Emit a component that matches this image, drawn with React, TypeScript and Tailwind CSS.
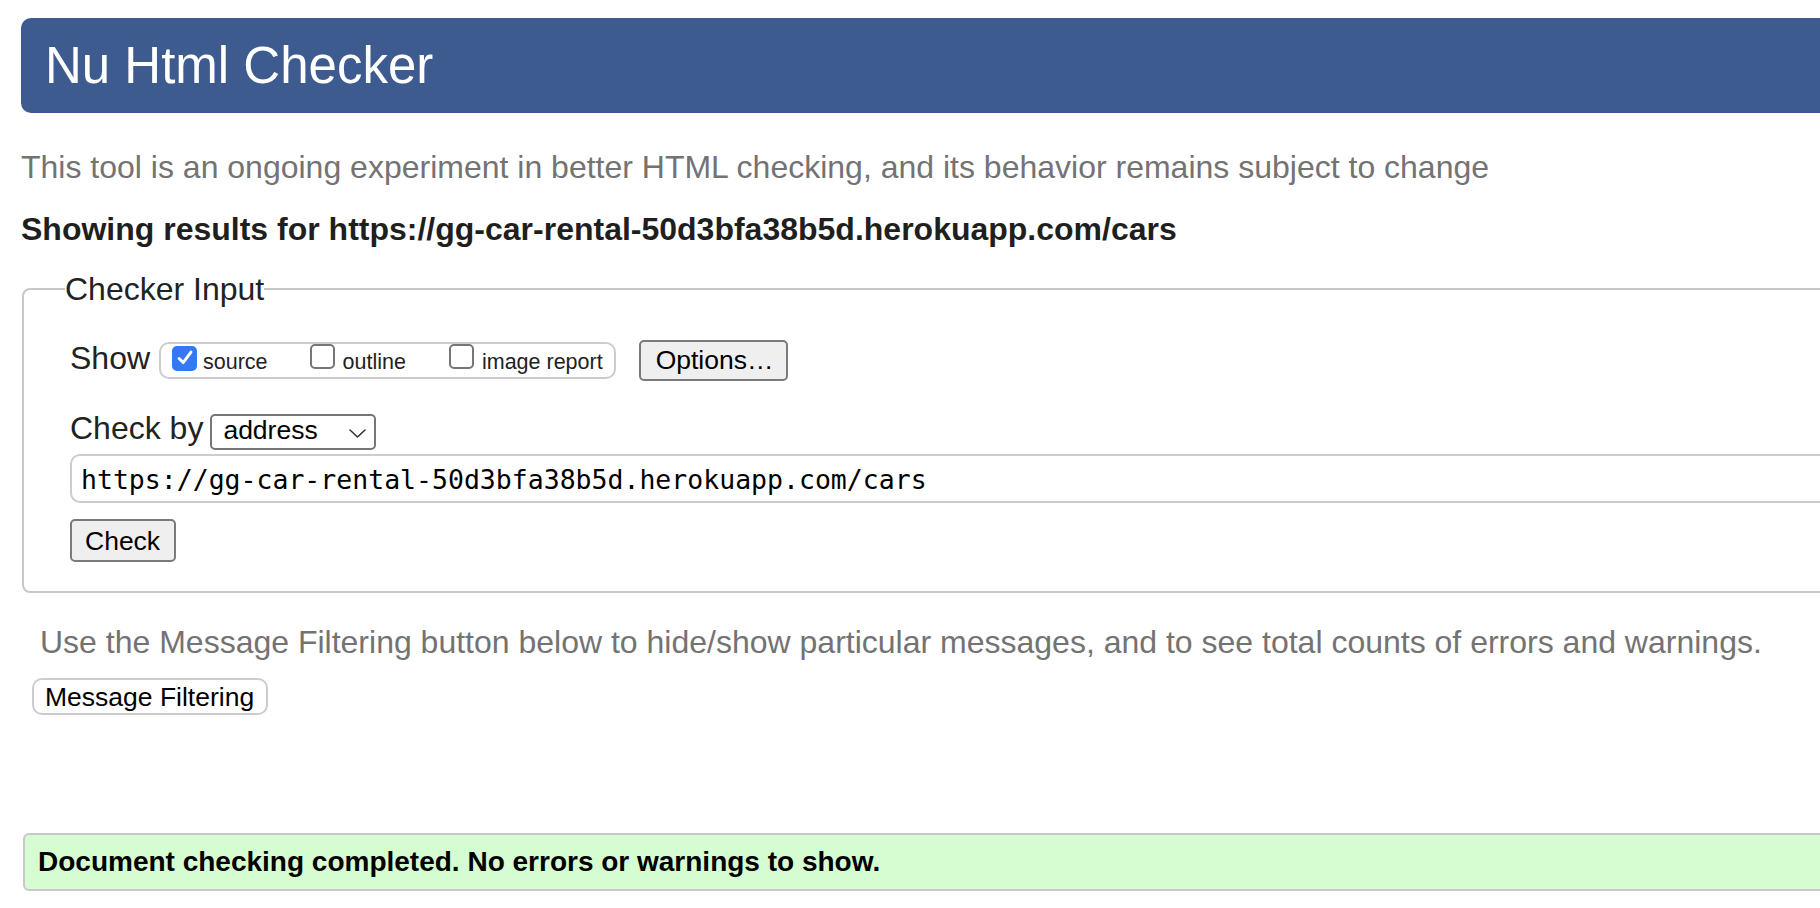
import React from 'react';

const Checkbox = ({ checked }: { checked?: boolean }) =>
  checked ? (
    <span className="flex h-[25px] w-[25px] shrink-0 items-center justify-center rounded-[5px] bg-[#3478f6]">
      <svg viewBox="0 0 24 24" className="h-[22px] w-[22px]" fill="none" stroke="white" strokeWidth="3.2" strokeLinecap="round" strokeLinejoin="round">
        <path d="M5.5 12.5 L10 17 L18.5 5.5" />
      </svg>
    </span>
  ) : (
    <span className="block h-[25px] w-[25px] shrink-0 rounded-[5px] border-2 border-[#767676] bg-white" />
  );

const App = () => {
  return (
    <div className="h-[908px] w-full overflow-hidden bg-white font-['Liberation_Sans',Arial,sans-serif] text-[32px] text-[#222]">
      <div className="w-[1900px]">
        {/* page header */}
        <div className="ml-[21px] mt-[18px] flex h-[95px] items-center rounded-l-[10px] bg-[#3d5b8f] pl-[24px]">
          <h1 className="text-[51px] leading-[57px] text-white">Nu Html Checker</h1>
        </div>

        <p className="ml-[21px] mt-[36px] leading-[37px] text-[#737373]">
          This tool is an ongoing experiment in better HTML checking, and its behavior remains subject to change
        </p>

        <p className="ml-[21px] mt-[25px] font-bold leading-[37px] text-[#1f1f1f]">
          Showing results for https://gg-car-rental-50d3bfa38b5d.herokuapp.com/cars
        </p>

        <fieldset className="ml-[22px] mt-[25px] rounded-[8px] border-2 border-[#c8c8c8] pb-[29px] pl-[46px] pt-[35px]">
          <legend className="-ml-[5px] leading-[32px]">Checker Input</legend>

          <div className="flex items-baseline">
            <span className="leading-[37px]">Show</span>
            <div className="ml-[9px] flex h-[37px] items-baseline rounded-[10px] border-2 border-[#cccccc] pl-[11px] pr-[11px] text-[21.5px] leading-[22px]">
              <Checkbox checked />
              <span className="ml-[6px]">source</span>
              <span className="ml-[42px]">
                <Checkbox />
              </span>
              <span className="ml-[8px]">outline</span>
              <span className="ml-[43px]">
                <Checkbox />
              </span>
              <span className="ml-[8px]">image report</span>
            </div>
            <button className="ml-[23px] h-[41px] w-[149px] rounded-[5px] border-2 border-[#7a7a7a] bg-[#efefef] pl-[15px] text-left text-[26.5px] leading-[37px] text-black">
              Options…
            </button>
          </div>

          <div className="mt-[29px] flex items-baseline">
            <span className="leading-[37px]">Check by</span>
            <div className="ml-[7px] flex h-[36px] w-[166px] items-start justify-between rounded-[5px] border-2 border-[#767676] pl-[11px] pr-[8px] text-[26.5px] leading-[28px] text-black">
              <span>address</span>
              <svg viewBox="0 0 17 9" className="mt-[13px] h-[9px] w-[17px]" fill="none" stroke="#333" strokeWidth="1.6" strokeLinecap="round" strokeLinejoin="round">
                <path d="M1 1 L8.5 8 L16 1" />
              </svg>
            </div>
          </div>

          <div className="mt-[4px] h-[49px] rounded-[10px] border-2 border-[#cccccc] pl-[9px] pt-[2px] font-['DejaVu_Sans_Mono',monospace] text-[26.5px] leading-[43px] text-black">
            https://gg-car-rental-50d3bfa38b5d.herokuapp.com/cars
          </div>

          <button className="mt-[16px] block h-[43px] w-[106px] rounded-[5px] border-2 border-[#7a7a7a] bg-[#efefef] pl-[13px] text-left text-[26.5px] leading-[36px] text-black">
            Check
          </button>
        </fieldset>

        <p className="ml-[40px] mt-[31px] leading-[37px] text-[#737373]">
          Use the Message Filtering button below to hide/show particular messages, and to see total counts of errors and warnings.
        </p>

        <button className="ml-[32px] mt-[17px] block h-[37px] w-[236px] rounded-[10px] border-2 border-[#cccccc] bg-white pl-[11px] text-left text-[26.5px] leading-[30px] text-black">
          Message Filtering
        </button>

        <div className="ml-[23px] mt-[118px] h-[58px] rounded-[6px] border-2 border-[#c8c8c8] bg-[#d6fcd1] pl-[13px] text-[28px] font-bold leading-[54px] text-black">
          Document checking completed. No errors or warnings to show.
        </div>
      </div>
    </div>
  );
};

export default App;
